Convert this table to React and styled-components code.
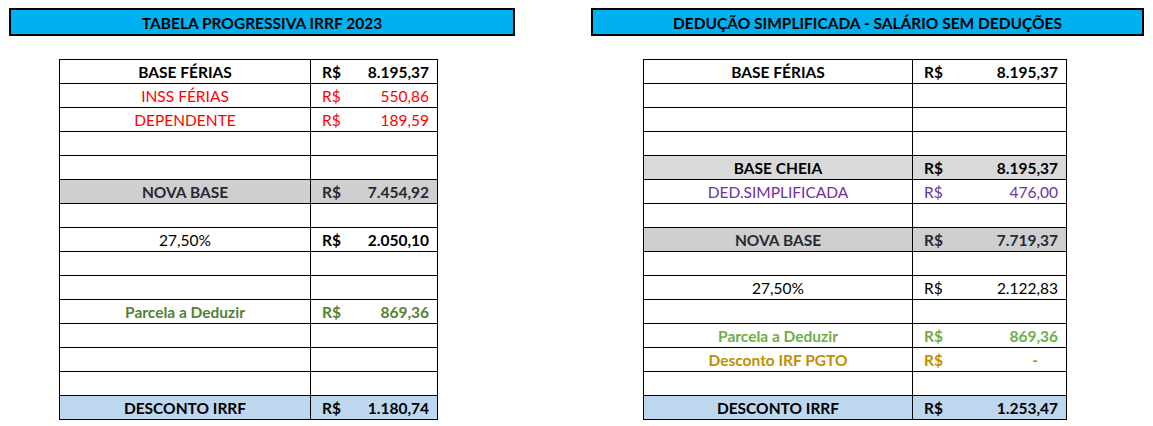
import React from 'react';
import styled, { createGlobalStyle } from 'styled-components';

const Global = createGlobalStyle`
  html, body { margin: 0; padding: 0; background: #ffffff; }
  body { font-family: Lato, "Noto Sans", sans-serif; color: #000; }
`;

const Page = styled.div`
  display: flex;
  gap: 76px;
  padding: 8px 9px;
  align-items: flex-start;
`;

const Section = styled.section`
  display: flex;
  flex-direction: column;
  gap: 23px;
  width: ${p => p.$width}px;
`;

const Header = styled.div`
  height: 23px;
  border: 2px solid #000;
  background: #00b0f0;
  display: flex;
  align-items: center;
  justify-content: center;
  font-weight: 700;
  font-size: 15.5px;
  padding-top: 1px;
`;

const Table = styled.div`
  margin-left: ${p => p.$indent}px;
  display: grid;
  grid-template-columns: ${p => p.$c1}px ${p => p.$c2}px;
  grid-auto-rows: 24px;
  border-left: 1px solid #000;
  border-top: 1px solid #000;
  width: max-content;
`;

const Cell = styled.div`
  border-right: 1px solid #000;
  border-bottom: 1px solid #000;
  background: ${p => p.$bg || '#fff'};
  color: ${p => p.$color || '#000'};
  font-size: 15.5px;
  display: flex;
  align-items: center;
  padding-top: 1px;
  box-sizing: border-box;
  white-space: nowrap;
`;

const Label = styled(Cell)`
  justify-content: center;
  font-weight: ${p => (p.$bold ? 700 : 400)};
`;

const Amount = styled(Cell)`
  justify-content: space-between;
  padding-left: 11px;
  padding-right: 8px;
  font-weight: ${p => (p.$bold ? 700 : 400)};
`;

const Dash = styled.span`
  margin-right: 20px;
`;

const RED = '#ff0000';
const DARK = '#222b35';
const GRAY = '#d0cece';
const LIGHTGRAY = '#d9d9d9';
const BLUE = '#bdd7ee';

const leftRows = [
  { label: 'BASE FÉRIAS', value: '8.195,37', bold: true, vbold: true },
  { label: 'INSS FÉRIAS', value: '550,86', color: RED },
  { label: 'DEPENDENTE', value: '189,59', color: RED },
  {},
  {},
  { label: 'NOVA BASE', value: '7.454,92', bold: true, vbold: true, color: DARK, bg: GRAY },
  {},
  { label: '27,50%', value: '2.050,10', vbold: true },
  {},
  {},
  { label: 'Parcela a Deduzir', value: '869,36', bold: true, vbold: true, color: '#548235' },
  {},
  {},
  {},
  { label: 'DESCONTO IRRF', value: '1.180,74', bold: true, vbold: true, bg: BLUE },
];

const rightRows = [
  { label: 'BASE FÉRIAS', value: '8.195,37', bold: true, vbold: true },
  {},
  {},
  {},
  { label: 'BASE CHEIA', value: '8.195,37', bold: true, vbold: true, bg: LIGHTGRAY },
  { label: 'DED.SIMPLIFICADA', value: '476,00', color: '#7030a0' },
  {},
  { label: 'NOVA BASE', value: '7.719,37', bold: true, vbold: true, color: DARK, bg: GRAY },
  {},
  { label: '27,50%', value: '2.122,83' },
  {},
  { label: 'Parcela a Deduzir', value: '869,36', bold: true, vbold: true, color: '#70ad47' },
  { label: 'Desconto IRF PGTO', value: '-', bold: true, vbold: true, color: '#bf8f00' },
  {},
  { label: 'DESCONTO IRRF', value: '1.253,47', bold: true, vbold: true, bg: BLUE },
];

function Sheet({ rows, c1, c2, indent }) {
  return (
    <Table $c1={c1} $c2={c2} $indent={indent}>
      {rows.map((r, i) => (
        <React.Fragment key={i}>
          <Label $bold={r.bold} $color={r.color} $bg={r.bg}>
            {r.label || ''}
          </Label>
          <Amount $bold={r.vbold} $color={r.color} $bg={r.bg}>
            {r.value ? (
              <>
                <span>R$</span>
                {r.value === '-' ? <Dash>-</Dash> : <span>{r.value}</span>}
              </>
            ) : null}
          </Amount>
        </React.Fragment>
      ))}
    </Table>
  );
}

export default function App() {
  return (
    <>
      <Global />
      <Page>
        <Section $width={506}>
          <Header>TABELA PROGRESSIVA IRRF 2023</Header>
          <Sheet rows={leftRows} c1={251} c2={127} indent={50} />
        </Section>
        <Section $width={553}>
          <Header>DEDUÇÃO SIMPLIFICADA - SALÁRIO SEM DEDUÇÕES</Header>
          <Sheet rows={rightRows} c1={269} c2={154} indent={52} />
        </Section>
      </Page>
    </>
  );
}
